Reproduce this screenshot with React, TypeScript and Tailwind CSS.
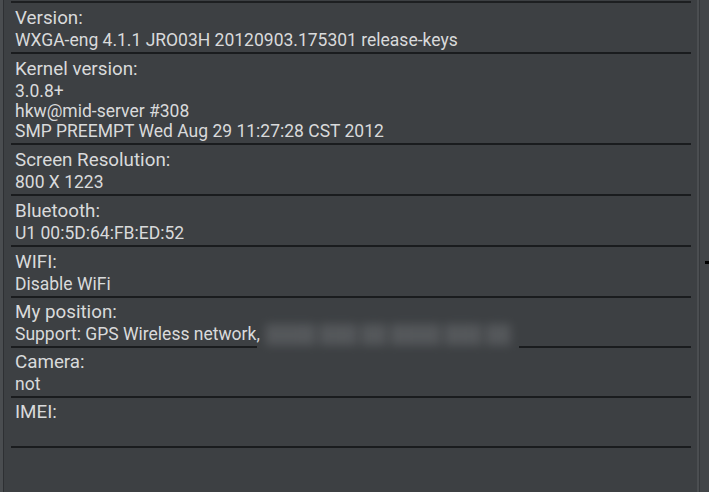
import React from "react";

type Row = { label: string; values: string[]; blur?: boolean };

const rows: Row[] = [
  { label: "Version:", values: ["WXGA-eng 4.1.1 JRO03H 20120903.175301 release-keys"] },
  {
    label: "Kernel version:",
    values: ["3.0.8+", "hkw@mid-server #308", "SMP PREEMPT Wed Aug 29 11:27:28 CST 2012"],
  },
  { label: "Screen Resolution:", values: ["800 X 1223"] },
  { label: "Bluetooth:", values: ["U1 00:5D:64:FB:ED:52"] },
  { label: "WIFI:", values: ["Disable WiFi"] },
  { label: "My position:", values: ["Support: GPS Wireless network,"], blur: true },
  { label: "Camera:", values: ["not"] },
  { label: "IMEI:", values: [""] },
];

export default function App() {
  return (
    <div
      className="w-[709px] h-[492px] bg-[#3d4043] flex overflow-hidden text-[#d9dadb]"
      style={{ fontFamily: "Roboto, 'Noto Sans', sans-serif" }}
    >
      <div className="w-[4px] bg-[#4a4d50] border-r border-[#2e3033]" />
      <div className="flex-1 flex flex-col pl-[7px] pr-[6px]">
        <div className="h-[3px] border-b-2 border-[#1d1f21]" />
        {rows.map((r, i) => (
          <div key={i} className={"relative flex flex-col " + (i >= 5 ? "-mt-[1px]" : "")}>
            <div className="h-[27px] pl-[4px] pt-[3px] text-[18.8px] leading-[24px]">{r.label}</div>
            {r.values.map((v, j) => (
              <div key={j} className="h-[20px] pl-[4px] text-[17.5px] leading-[21px] whitespace-nowrap">
                {v}
                {r.blur && (
                  <span className="inline-block ml-[6px] text-[#5f6265] blur-[5px] opacity-70">
                    ████ ███ ██ ████ ███ ██
                  </span>
                )}
              </div>
            ))}
            {r.blur ? (
              <div className="flex h-[2px] mt-[2px]">
                <div className="w-[246px] bg-[#1a1c1e]" />
                <div className="w-[262px]" />
                <div className="flex-1 bg-[#1a1c1e]" />
              </div>
            ) : (
              <div className="h-[2px] mt-[2px] bg-[#1a1c1e]" />
            )}
          </div>
        ))}
      </div>
      <div className="w-[2px] bg-[#4b4e51]" />
      <div className="relative w-[10px] bg-[#424548] border-l border-[#36393c]">
        <div className="absolute left-[5px] top-[261px] w-[5px] h-[3px] bg-black" />
      </div>
    </div>
  );
}
